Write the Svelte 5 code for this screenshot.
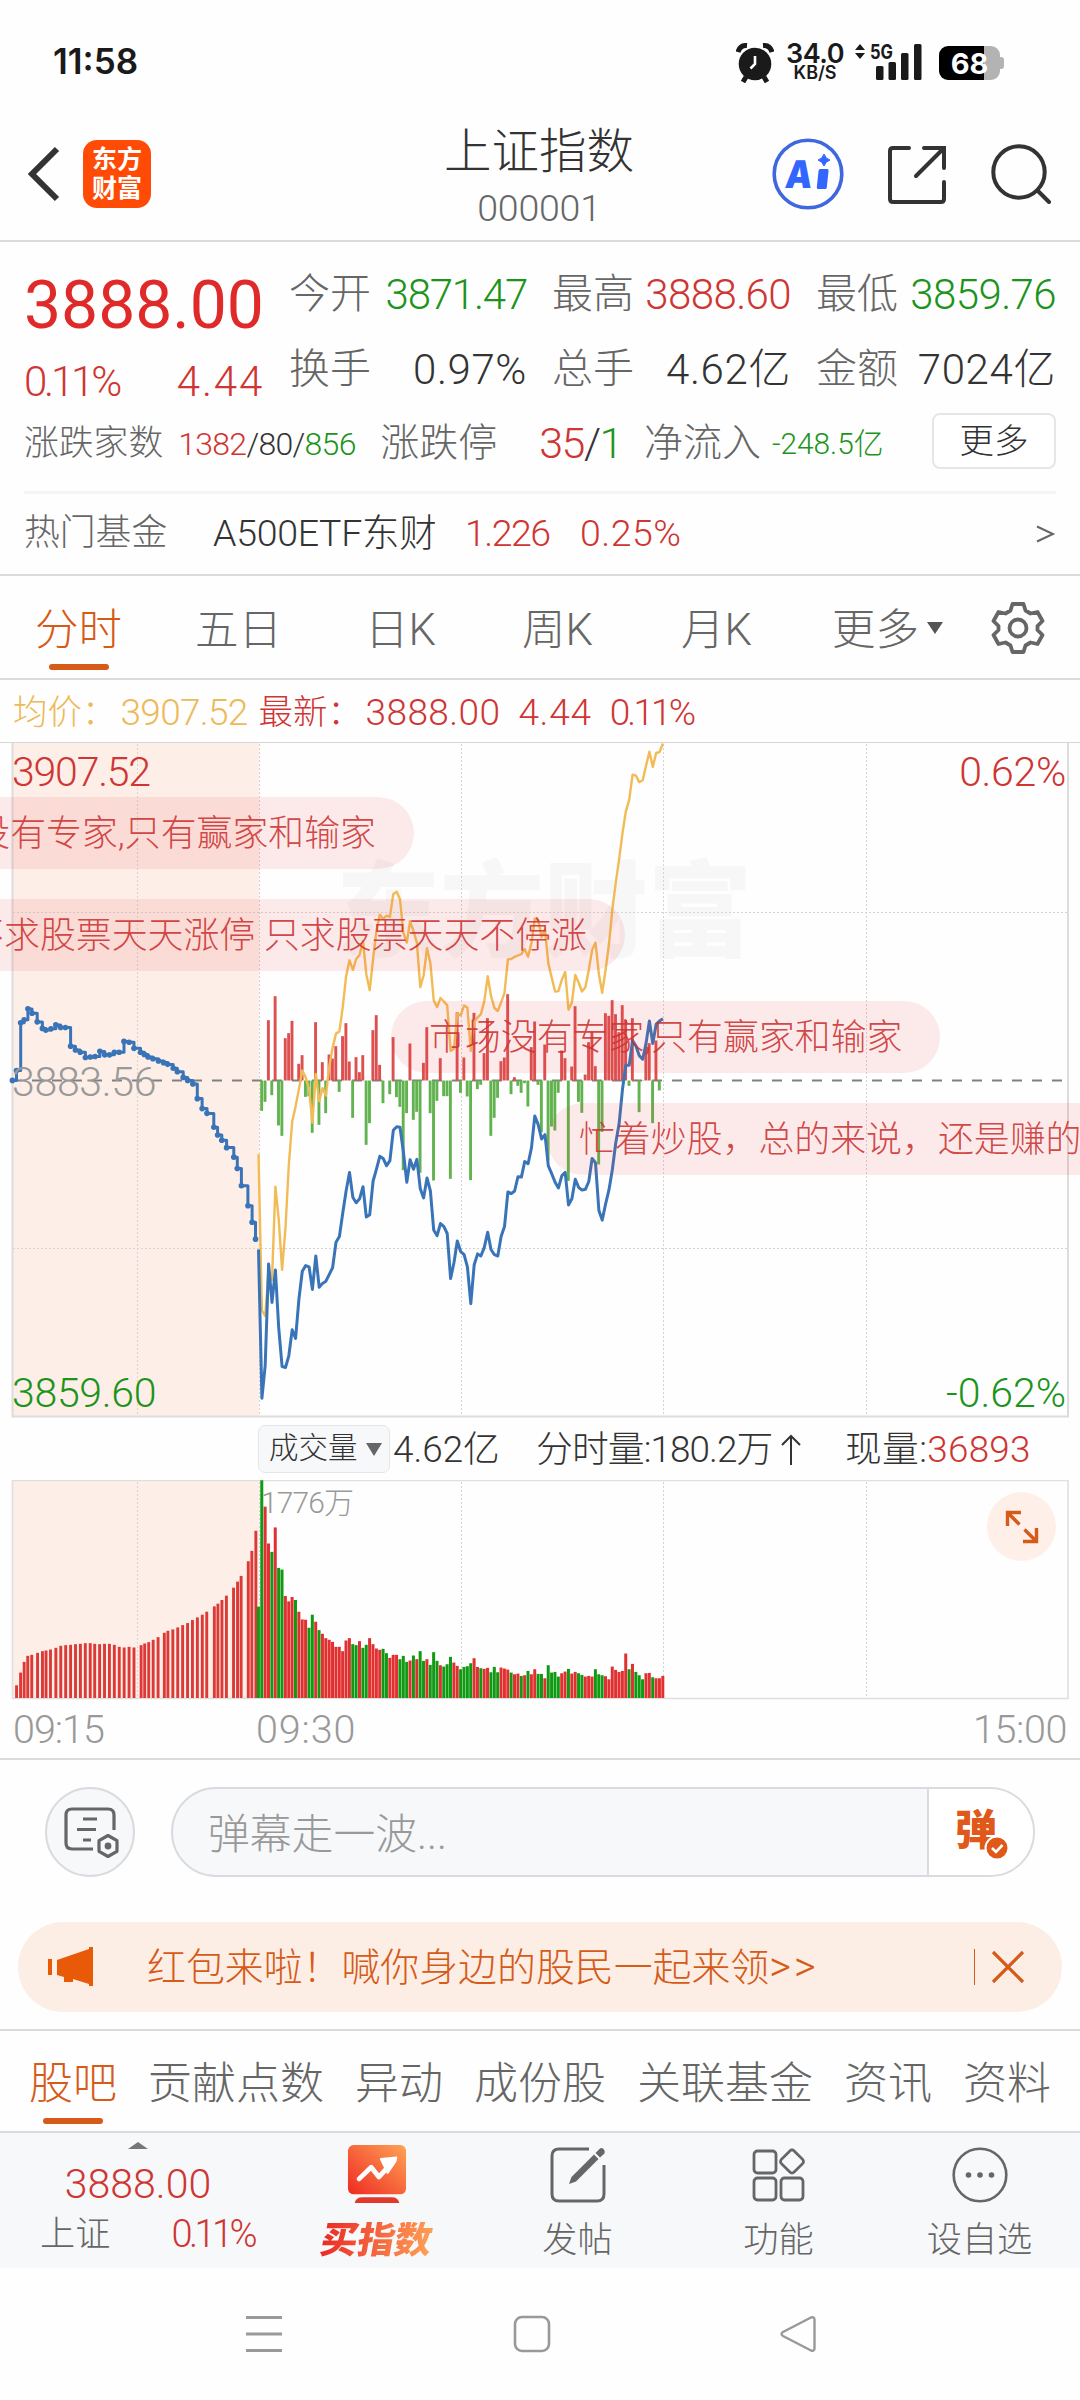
<script lang="ts">
    const quotes = [
        { label: '今开', value: '3871.47', tone: 'down' },
        { label: '最高', value: '3888.60', tone: 'up' },
        { label: '最低', value: '3859.76', tone: 'down' },
        { label: '换手', value: '0.97%', tone: '' },
        { label: '总手', value: '4.62亿', tone: '' },
        { label: '金额', value: '7024亿', tone: '' },
    ];

    const periods = ['分时', '五日', '日K', '周K', '月K'];
    const sections = ['股吧', '贡献点数', '异动', '成份股', '关联基金', '资讯', '资料'];

    // series are stored in ticks counted from the top of the chart
    const TICK = 2.306;
    const STEP = 3.37;
    const OPEN_X = 258.5;
    const MID = 338.5;
    const VOL_BASE = 218;

    const auction = [
        [36, 785], [48, 762], [60, 652], [70, 645], [81, 620], [93, 630], [108, 650], [123, 665], [133, 669],
        [148, 666], [162, 657], [176, 663], [190, 663], [205, 706], [219, 715], [233, 720], [248, 732], [262, 731],
        [276, 730], [290, 718], [304, 726], [318, 726], [332, 720], [346, 720], [360, 695], [375, 697], [389, 711],
        [408, 720], [419, 725], [430, 731], [444, 735], [460, 740], [475, 744], [487, 748], [503, 757], [515, 765],
        [532, 778], [545, 785], [560, 793], [573, 827], [587, 850], [601, 861], [621, 893], [632, 911], [644, 923],
        [658, 940], [679, 962], [689, 988], [701, 1028], [720, 1074], [732, 1112], [742, 1151],
    ].map(([x, y]) => [x / 2.904, y / TICK - 2]);

    const price = [
        1175, 1518, 1442, 1208, 1297, 1222, 1355, 1445, 1447, 1420, 1360, 1380, 1290, 1225, 1212, 1215, 1267, 1190,
        1262, 1253, 1248, 1232, 1217, 1158, 1145, 1090, 1040, 997, 1055, 1067, 1058, 1030, 1100, 1095, 1017, 990,
        960, 965, 982, 970, 900, 892, 893, 950, 1020, 968, 990, 967, 1035, 1056, 1010, 1040, 1130, 1143, 1115, 1122,
        1138, 1242, 1205, 1155, 1180, 1187, 1215, 1300, 1210, 1185, 1190, 1170, 1135, 1175, 1187, 1190, 1145, 1122,
        1042, 1046, 1040, 1007, 1008, 972, 977, 940, 867, 887, 920, 910, 982, 1000, 1020, 1033, 1005, 997, 1072,
        1058, 1013, 1032, 1038, 1036, 1018, 965, 975, 1085, 1107, 1070, 1037, 990, 930, 885, 805, 750, 750, 693,
        705, 728, 736, 700, 648, 700, 655, 648, 643,
    ];

    const average = [
        955, 1315, 1328, 1225, 1245, 1030, 1105, 1222, 1125, 980, 880, 845, 805, 762, 778, 805, 883, 770, 833, 803,
        820, 752, 710, 677, 672, 615, 545, 508, 530, 505, 495, 463, 540, 577, 505, 440, 403, 412, 405, 408, 355, 350,
        367, 445, 467, 418, 440, 468, 570, 543, 480, 515, 600, 616, 595, 603, 612, 717, 712, 630, 635, 612, 617, 717,
        650, 640, 632, 602, 545, 590, 618, 625, 605, 583, 506, 505, 500, 497, 494, 482, 500, 468, 412, 415, 455, 437,
        515, 548, 580, 579, 553, 535, 622, 605, 542, 560, 580, 570, 530, 485, 467, 540, 583, 530, 470, 390, 330, 275,
        215, 165, 138, 80, 82, 97, 93, 60, 27, 62, 30, 28, 8,
    ];

    // buying strength per minute, negative hangs below the middle line
    const strength = [
        -91, -64, 181, -44, 253, -135, -166, 127, 142, 179, 0, 50, 76, -49, -47, -157, 175, -133, 55, -98, 78, 66,
        103, -34, 133, 172, 57, -112, 70, 25, 76, -193, -128, 151, 196, 47, -68, 0, -41, 130, -50, -79, -269, -98,
        111, -118, -94, -277, 53, 160, -98, -300, -61, 67, -47, -47, -295, 0, 205, -37, 69, -48, -299, 203, -26, -13,
        82, 187, -166, -112, -52, 58, 69, 259, -41, 10, -16, -37, -8, -78, 100, 177, -13, -155, 108, -240, -138,
        -150, -37, 90, 67, -301, 42, 223, -64, -97, 18, 115, 147, 43, -252, -154, 202, 194, 241, 199, 145, 226, 182,
        -16, 187, 2, -95, 1, 108, 112, -128, 120, -30,
    ];

    const auctionVolume = [
        [37, 38], [46, 76], [54, 108], [62, 126], [71, 129], [84, 135], [95, 140], [103, 142], [113, 145], [125, 150],
        [136, 156], [147, 158], [158, 159], [169, 161], [180, 162], [191, 164], [202, 164], [212, 162], [223, 161],
        [234, 162], [245, 162], [256, 159], [267, 153], [278, 151], [289, 153], [300, 151], [316, 158], [324, 163],
        [333, 167], [343, 174], [354, 182], [368, 195], [376, 201], [387, 205], [398, 211], [409, 218], [420, 224],
        [431, 233], [442, 241], [453, 249], [463, 258], [480, 274], [488, 282], [497, 293], [507, 306], [523, 330],
        [532, 348], [540, 365], [556, 409], [564, 440], [573, 500],
    ].map(([x, h]) => ({ x: x / 2.24, h: h / 2.99 }));

    // negative = falling minute
    const volume = [
        -273, -651, 572, 462, -437, 510, -389, -384, 305, 289, 302, -293, 258, 235, 234, -210, -249, 228, -203, 192,
        179, 174, 168, 153, 153, 140, 172, 179, -161, -158, 170, -150, -159, 179, 161, 148, 144, -147, -134, 120,
        129, 129, -116, -126, -108, 112, -127, 116, -140, -111, 116, -99, -137, -111, 98, -94, -101, -123, 106, 96,
        -86, -93, -95, -104, 119, 93, -89, 87, 90, -77, -93, -77, 91, 88, 85, -76, 71, 73, -66, 68, -81, 71, 86, -72,
        -72, 59, -98, -76, -78, -64, 74, 79, -87, 73, 78, -74, -69, 64, 66, 64, -86, -71, -68, 65, 56, 94, 84, 78,
        81, 133, -86, 102, -78, -68, -56, 74, 75, -62, 59, 59, 66,
    ];

    const line = (ticks: number[]) =>
        ticks.map((t, i) => `${(OPEN_X + i * STEP).toFixed(1)},${(t / TICK - 2).toFixed(1)}`).join(' ');

    const auctionPath = auction
        .map(([x, y], i) => (i === 0 ? `M${x.toFixed(1)} ${y.toFixed(1)}` : `H${x.toFixed(1)}V${y.toFixed(1)}`))
        .join('');
</script>

<div class="screen">
    <div class="status">
        <span class="clock">11:58</span>
        <div class="status-icons">
            <svg class="alarm" viewBox="0 0 38 40" width="38" height="40">
                <circle cx="19" cy="21" r="16.3" fill="#1a1a1a" />
                <path d="M2 9Q4 2 11 2.500M36 9Q34 2 27 2.500" stroke="#1a1a1a" stroke-width="5" fill="none" />
                <path d="M10 34l-3 5M28 34l3 5" stroke="#1a1a1a" stroke-width="5" />
                <path d="M19 13v8l-4.500 4.500" stroke="#fff" stroke-width="2.600" fill="none" />
            </svg>
            <div class="speed"><b>34.0</b><small>KB/S</small></div>
            <svg class="signal" viewBox="0 0 70 40" width="70" height="40">
                <path d="M1 7l5-6 5 6zM1 10l5 6 5-6z" fill="#1a1a1a" />
                <text x="16" y="16" class="net" textLength="23" lengthAdjust="spacingAndGlyphs">5G</text>
                <rect x="22" y="23" width="7.500" height="14" rx="1.500" />
                <rect x="34.500" y="19" width="7.500" height="18" rx="1.500" />
                <rect x="47" y="10" width="7.500" height="27" rx="1.500" />
                <rect x="60" y="1" width="7.500" height="36" rx="1.500" />
            </svg>
            <div class="battery"><i></i><span>68</span></div>
        </div>
    </div>

    <header>
        <svg class="back" viewBox="0 0 34 56" width="34" height="56">
            <path d="M31 3L6 28l25 25" fill="none" stroke="#333" stroke-width="6" />
        </svg>
        <div class="logo"><span>东方</span><span>财富</span></div>
        <div class="title">
            <h1>上证指数</h1>
            <span>000001</span>
        </div>
        <svg class="ai" viewBox="0 0 72 72" width="72" height="72">
            <circle cx="36" cy="36" r="33.800" fill="none" stroke="#3f67e0" stroke-width="3.600" />
            <g transform="skewX(-6)">
                <text x="17.500" y="50" textLength="27" lengthAdjust="spacingAndGlyphs">A</text>
                <rect x="50" y="31" width="10" height="20" rx="1.500" fill="#3366ff" />
            </g>
            <path d="M52 16q1.500 5 6 6q-4.500 1.500-6 6q-1.500-4.500-6-6q4.500-1 6-6z" fill="#3366ff" stroke="#3366ff" />
        </svg>
        <svg class="share" viewBox="0 0 60 60" width="60" height="60">
            <path d="M22 3H6Q3 3 3 6v48q0 3 3 3h48q3 0 3-3V37M37 3h20v20M56 4L29 31" fill="none" stroke="#333" stroke-width="4" stroke-linecap="round" />
        </svg>
        <svg viewBox="0 0 60 60" width="60" height="60">
            <circle cx="28" cy="28" r="25.700" fill="none" stroke="#333" stroke-width="4" />
            <path d="M47 47l11 11" stroke="#333" stroke-width="4" stroke-linecap="round" />
        </svg>
    </header>

    <section class="quote">
        <div class="quote-top">
            <div class="last up">
                <strong>3888.00</strong>
                <div><span class="pct">0.11%</span><span class="diff">4.44</span></div>
            </div>
            <div class="quote-grid">
                {#each quotes as q}
                    <div class="cell"><label>{q.label}</label><span class={q.tone}>{q.value}</span></div>
                {/each}
            </div>
        </div>
        <div class="breadth">
            <span class="lab sm">涨跌家数</span>
            <span class="counts"><i class="up">1382</i>/80/<i class="down">856</i></span>
            <span class="lab">涨跌停</span>
            <span class="limits"><i class="up">35</i>/<i class="down">1</i></span>
            <span class="lab">净流入</span>
            <span class="flow down">-248.5亿</span>
            <button>更多</button>
        </div>
        <div class="fund">
            <span class="fund-label">热门基金</span>
            <span class="fund-name">A500ETF东财</span>
            <span class="up fund-price">1.226</span>
            <span class="up fund-pct">0.25%</span>
            <svg viewBox="0 0 20 20" width="20" height="20">
                <path d="M1 2.500l16 7.500-16 7.500" fill="none" stroke="#666" stroke-width="2" />
            </svg>
        </div>
    </section>

    <nav class="periods">
        {#each periods as p, i}
            <span class:active={i === 0}>{p}</span>
        {/each}
        <span class="more">更多<i></i></span>
        <svg viewBox="0 0 54 54" width="54" height="54">
            <path d="M21.500 3h11l2 6.500 5 3 7-1.500 5 9-5 5v4l5 5-5 9-7-1.500-5 3-2 6.500h-11l-2-6.500-5-3-7 1.500-5-9 5-5v-4l-5-5 5-9 7 1.500 5-3z" fill="none" stroke="#666" stroke-width="3.800" stroke-linejoin="round" />
            <circle cx="27" cy="27" r="8.500" fill="none" stroke="#666" stroke-width="3.800" />
        </svg>
    </nav>

    <div class="legend">
        <span class="avg">均价：</span><span class="avg num">3907.52</span>
        <span class="up lat">最新：</span><span class="up num">3888.00</span>
        <span class="up num wide">4.44</span>
        <span class="up num tight">0.11%</span>
    </div>

    <div class="chart">
        <div class="watermark">东方财富</div>
        <svg viewBox="0 0 1080 676" width="1080" height="676">
            <rect x="13" y="1" width="246" height="673" fill="#fdeee7" />
            <path d="M137.500 2V674M259.500 2V674M461.500 2V674M663.500 2V674M866.500 2V674M13 170.500H1067M13 506.500H1067" class="grid" />
            <path d="M12.500 1V674.500H1068V1" fill="none" stroke="#dcdcdc" stroke-width="2" />
            <path d="M0 .5H1080" stroke="#d6d6d6" />
            <path d="M12 {MID}H1066" stroke="#808080" stroke-width="1.800" stroke-dasharray="10 10" />
            {#each strength as s, i}
                <rect x={260.2 + i * STEP} y={s > 0 ? MID - s / 3 : MID} width="2.9" height={Math.abs(s) / 3} fill={s > 0 ? '#dd5050' : '#62b350'} />
            {/each}
            <polyline points={line(average)} class="avg-line" />
            <path d={auctionPath} class="price-line" />
            {#each auction as [x, y]}
                <circle cx={x} cy={y} r="2.8" fill="#3a74b8" />
            {/each}
            <polyline points={line(price)} class="price-line" />
        </svg>
        <span class="tick tl up">3907.52</span>
        <span class="tick tr up">0.62%</span>
        <span class="tick ml">3883.56</span>
        <span class="tick bl down">3859.60</span>
        <span class="tick br down">-0.62%</span>
        <span class="danmu d1">市场没有专家,只有赢家和输家</span>
        <span class="danmu d2">不求股票天天涨停 只求股票天天不停涨</span>
        <span class="danmu d3">市场没有专家,只有赢家和输家</span>
        <span class="danmu d4">忙着炒股，总的来说，还是赚的</span>
    </div>

    <div class="vol-head">
        <span class="select">成交量<i></i></span>
        <span class="v1">4.62亿</span>
        <span class="v2">分时量:180.2万<svg viewBox="0 0 20 32" width="20" height="32"><path d="M10 31V2M1 11l9-9 9 9" fill="none" stroke="#333" stroke-width="2" /></svg></span>
        <span class="v3">现量:<i class="up">36893</i></span>
    </div>

    <div class="vol-chart">
        <svg viewBox="0 0 1080 220" width="1080" height="220">
            <rect x="13" y="1" width="246" height="217" fill="#fdeee7" />
            <path d="M137.500 2V218M259.500 2V218M461.500 2V218M663.500 2V218M866.500 2V218" class="grid" />
            <path d="M12.500 .5H1068V218.500H12.500z" fill="none" stroke="#dfdfdf" stroke-width="1.600" />
            {#each auctionVolume as v}
                <rect x={v.x - 1.4} y={VOL_BASE - v.h} width="2.9" height={v.h} fill="#dc3a37" />
            {/each}
            {#each volume as v, i}
                <rect x={256.9 + i * STEP} y={VOL_BASE - Math.abs(v) / 2.99} width="3" height={Math.abs(v) / 2.99} fill={v > 0 ? '#e13030' : '#109a14'} />
            {/each}
        </svg>
        <span class="vol-max">1776万</span>
        <div class="expand">
            <svg viewBox="0 0 34 34" width="34" height="34">
                <path d="M2.500 16V2.500H16M3 3l11.500 11.500M31.500 18v13.500H18M31 31L19.500 19.500" fill="none" stroke="#d65a18" stroke-width="3.400" />
            </svg>
        </div>
    </div>

    <div class="axis"><span>09:15</span><span>09:30</span><span>15:00</span></div>

    <div class="chat">
        <div class="chat-set">
            <svg viewBox="0 0 56 52" width="56" height="52">
                <path d="M29 42H8q-6 0-6-6V8q0-6 6-6h36q6 0 6 6v15" fill="none" stroke="#666" stroke-width="3.200" />
                <path d="M19 12h14M13 22.500h19M19 33h8" stroke="#666" stroke-width="3.200" />
                <path d="M44 28.500l9 5.200v10.600l-9 5.200-9-5.200V33.700z" fill="#f7f8fa" stroke="#666" stroke-width="3.200" stroke-linejoin="round" />
                <circle cx="44" cy="39" r="3.400" fill="#666" />
            </svg>
        </div>
        <div class="chat-input">
            <span>弹幕走一波...</span>
            <div class="chat-toggle">
                <b>弹</b>
                <svg viewBox="0 0 26 26" width="26" height="26">
                    <circle cx="13" cy="13" r="11.500" fill="#e0591a" stroke="#fff" stroke-width="2" />
                    <path d="M8 13l4 4 6.500-7" fill="none" stroke="#fff" stroke-width="2.600" />
                </svg>
            </div>
        </div>
    </div>

    <div class="banner">
        <svg viewBox="0 0 46 40" width="46" height="40">
            <path d="M0 12h4v16H0zM9 13L41 2V0h4v39h-4v-2l-16-5v3h-9v-5l-7-2z" fill="#e85908" />
        </svg>
        <span>红包来啦！喊你身边的股民一起来领<em>&gt;&gt;</em></span>
        <i></i>
        <svg viewBox="0 0 34 34" width="34" height="34">
            <path d="M2 2l30 30M32 2L2 32" stroke="#d65a18" stroke-width="3.200" />
        </svg>
    </div>

    <nav class="sections">
        {#each sections as s, i}
            <span class:active={i === 0}>{s}</span>
        {/each}
    </nav>

    <footer>
        <div class="index">
            <i class="caret"></i>
            <strong class="up">3888.00</strong>
            <div><span>上证</span><span class="up">0.11%</span></div>
        </div>
        <div class="item">
            <svg viewBox="0 0 60 62" width="60" height="62">
                <defs>
                    <linearGradient id="buy" x1="0" y1="1" x2="1" y2="0">
                        <stop offset="0" stop-color="#ee2a22" />
                        <stop offset="1" stop-color="#ffa355" />
                    </linearGradient>
                </defs>
                <rect width="60" height="51" rx="6" fill="url(#buy)" />
                <path d="M7 60q1-6 8-6h30q7 0 8 6z" fill="#e0392b" />
                <path d="M11.500 35L24 23l8 10 12-13" fill="none" stroke="#fff" stroke-width="5" stroke-linecap="round" stroke-linejoin="round" />
                <path d="M34 14.500l16-1.500-1 4-8 12z" fill="#fff" stroke="#fff" stroke-width="2" stroke-linejoin="round" />
            </svg>
            <span class="buy">买指数</span>
        </div>
        <div class="item">
            <svg viewBox="0 0 56 56" width="56" height="56">
                <path d="M39 2H9Q2 2 2 9v38q0 7 7 7h38q7 0 7-7V18" fill="none" stroke="#666" stroke-width="3" />
                <path d="M19 37l2.500-7L44 7.500l4.500 4.500L26 34.500zM45.500 6l4-4q2-2 4 0t1 4.500l-4.500 4z" fill="#666" />
            </svg>
            <span>发帖</span>
        </div>
        <div class="item">
            <svg viewBox="0 0 54 56" width="54" height="56">
                <g fill="none" stroke="#666" stroke-width="2.800">
                    <rect x="2" y="4" width="22" height="22" rx="3.500" />
                    <rect x="2" y="31" width="22" height="22" rx="3.500" />
                    <rect x="29" y="31" width="22" height="22" rx="3.500" />
                    <rect x="31" y="5.500" width="18" height="18" rx="3" transform="rotate(45 40 14.500)" />
                </g>
            </svg>
            <span>功能</span>
        </div>
        <div class="item">
            <svg viewBox="0 0 56 56" width="56" height="56">
                <circle cx="28" cy="28" r="26.300" fill="none" stroke="#666" stroke-width="2.600" />
                <circle cx="16.500" cy="28" r="2.800" fill="#666" />
                <circle cx="28" cy="28" r="2.800" fill="#666" />
                <circle cx="39.500" cy="28" r="2.800" fill="#666" />
            </svg>
            <span>设自选</span>
        </div>
    </footer>

    <div class="gestures">
        <svg viewBox="0 0 36 38" width="36" height="38"><path d="M0 2.500h36M0 19h36M0 35.500h36" stroke="#999" stroke-width="3" /></svg>
        <svg viewBox="0 0 38 38" width="38" height="38"><rect x="2" y="2" width="34" height="34" rx="7" fill="none" stroke="#999" stroke-width="2.600" /></svg>
        <svg viewBox="0 0 38 38" width="38" height="38"><path d="M32 2.500L4 17q-3 2 0 4l28 14.500q3.500 1 3.500-2v-29q0-3-3.500-2z" fill="none" stroke="#999" stroke-width="2.400" /></svg>
    </div>
</div>

<style>
    :global(body) { margin: 0; background: #fff; }

    .screen {
        width: 1080px;
        height: 2400px;
        overflow: hidden;
        background: #fefefe;
        color: #333;
        font-family: Roboto, "Noto Sans CJK SC", sans-serif;
        font-weight: 300;
        line-height: 1;
        white-space: nowrap;
    }

    svg { display: block; flex: none; }
    i, em { font-style: normal; }
    .up { color: #cf3532; }
    .down { color: #1c941c; }

    /* status bar */
    .status {
        height: 120px;
        padding: 0 75px 0 53px;
        display: flex;
        justify-content: space-between;
        box-sizing: border-box;
    }
    .clock { margin-top: 44px; font: 600 35px/1 Inter, sans-serif; color: #1a1a1a; }
    .status-icons { display: flex; margin-top: 43px; }
    .alarm { margin-right: 13px; }
    .speed {
        width: 56px;
        display: flex;
        flex-direction: column;
        align-items: center;
        font-family: Inter, sans-serif;
        color: #1a1a1a;
    }
    .speed b { font-size: 27px; line-height: 21px; font-weight: 600; letter-spacing: -0.5px; }
    .speed small { font-size: 18px; line-height: 18px; font-weight: 600; }
    .signal { margin-left: 11px; }
    .signal rect { fill: #1a1a1a; }
    .net { font: 700 20px Inter, sans-serif; fill: #1a1a1a; }
    .battery {
        position: relative;
        width: 61px;
        height: 34px;
        margin: 3px 5px 0 15px;
        border-radius: 9px;
        background: linear-gradient(90deg, #000 45px, #b3b3b3 45px);
        text-align: center;
    }
    .battery i {
        position: absolute;
        right: -4px;
        top: 11px;
        width: 5px;
        height: 12px;
        border-radius: 0 3px 3px 0;
        background: #b3b3b3;
    }
    .battery span { font: 700 29px/35px Inter, sans-serif; color: #fff; }

    /* header */
    header {
        position: relative;
        height: 122px;
        padding: 18px 29px 0 26px;
        display: flex;
        box-sizing: border-box;
        border-bottom: 2px solid #dadada;
    }
    .back { margin-top: 8px; }
    .logo {
        width: 68px;
        height: 68px;
        margin: 2px auto 0 23px;
        border-radius: 14px;
        background: #ff4b05;
        color: #fff;
        font-size: 25px;
        font-weight: 700;
        line-height: 29px;
        text-align: center;
        padding-top: 5px;
        box-sizing: border-box;
        display: flex;
        flex-direction: column;
    }
    .title {
        position: absolute;
        left: 0;
        right: 2px;
        top: 7px;
        text-align: center;
    }
    .title h1 { margin: 0; font-size: 47.5px; font-weight: 300; line-height: 51px; }
    .title span { display: block; margin-top: 12px; font-size: 37.5px; line-height: 37px; color: #666; letter-spacing: -0.2px; }
    .ai text { font: 900 38px Inter, sans-serif; fill: #3366ff; }
    .share { margin: 7px 44px 0 43px; }
    header > svg:last-child { margin-top: 6px; }

    /* quote */
    .quote { height: 334px; box-sizing: border-box; padding: 0 24px; border-bottom: 2px solid #dadada; }
    .quote-top { display: flex; height: 162px; }
    .last { width: 239px; }
    .last strong { display: block; margin-top: 31px; font-size: 66px; line-height: 66px; font-weight: 400; color: #e02a2a; }
    .last div { display: flex; justify-content: space-between; margin-top: 22px; font-size: 42px; line-height: 41px; }
    .pct { letter-spacing: -3.2px; }
    .diff { letter-spacing: 1.8px; margin-right: -1px; }
    .quote-grid {
        margin-left: 26px;
        display: grid;
        grid-template-columns: 238px 239px 240px;
        grid-template-rows: 75px 75px;
        column-gap: 25px;
        padding-top: 15px;
    }
    .cell { display: flex; align-items: center; justify-content: space-between; font-size: 42px; letter-spacing: -0.6px; }
    .cell:first-child { letter-spacing: -1.2px; }
    .cell:nth-child(n + 4) { letter-spacing: 0.6px; }
    .cell label { font-size: 41px; letter-spacing: 0; color: #666; }
    .breadth { display: flex; align-items: center; height: 79px; }
    .lab { font-size: 39px; color: #666; }
    .lab.sm { font-size: 34.8px; }
    .counts { width: 178px; margin: 0 24px 0 15px; font-size: 32px; letter-spacing: -0.7px; }
    .limits { margin: 0 22px 0 42px; font-size: 43px; letter-spacing: -1.5px; }
    .flow { font-size: 29.8px; margin-left: 11px; }
    button {
        width: 124px;
        height: 56px;
        margin: -6px 0 0 auto;
        padding: 2px 0 0;
        border: 2px solid #e6e6e6;
        border-radius: 8px;
        background: #fff;
        font: inherit;
        font-size: 34.5px;
        color: #333;
    }
    .fund {
        margin-top: 8px;
        height: 80px;
        border-top: 3px solid #f5f5f5;
        display: flex;
        align-items: center;
        font-size: 37.5px;
        letter-spacing: -0.3px;
    }
    .fund-label { width: 189px; font-size: 35.8px; letter-spacing: 0; color: #666; }
    .fund-name { width: 252px; }
    .fund-price { width: 115px; letter-spacing: -1.5px; }
    .fund-pct { letter-spacing: 0.5px; }
    .fund svg { margin-left: auto; }

    /* period tabs */
    .periods {
        height: 104px;
        display: grid;
        grid-template-columns: 160px 170px 157px 159px 151px 1fr auto;
        align-items: center;
        justify-items: start;
        padding: 7px 35px 0 35px;
        box-sizing: border-box;
        border-bottom: 2px solid #dadada;
        font-size: 43.5px;
        color: #666;
    }
    .periods svg { margin-top: -6px; }
    .active { position: relative; color: #d65a18; }
    .active::after {
        content: '';
        position: absolute;
        left: 50%;
        bottom: -18px;
        width: 60px;
        height: 6px;
        margin-left: -30px;
        border-radius: 3px;
        background: #d65a18;
    }
    .more { display: flex; align-items: center; }
    .more i { margin: -6px 0 0 8px; border: 8px solid transparent; border-top: 12px solid #555; border-bottom: 0; }

    .legend { height: 62px; display: flex; align-items: center; padding: 3px 0 0 13px; font-size: 34.5px; box-sizing: border-box; }
    .avg { color: #edb95a; }
    .num { font-size: 37px; margin-right: 18px; }
    .num.avg { margin: 0 11px 0 4px; letter-spacing: -0.7px; }
    .num.wide { letter-spacing: 0.7px; }
    .num.tight { letter-spacing: -2.8px; }
    .lat { width: 107px; }
    .lat + .num { letter-spacing: 0.4px; }

    /* minute chart */
    .chart { position: relative; height: 676px; }
    .chart svg { position: relative; }
    .grid { fill: none; stroke: #d4d4d4; stroke-width: 1; stroke-dasharray: 2 2; }
    .price-line { fill: none; stroke: #3a74b8; stroke-width: 3; stroke-linejoin: round; }
    .avg-line { fill: none; stroke: #f2bb55; stroke-width: 2.4; stroke-linejoin: round; }
    .watermark {
        position: absolute;
        left: 336px;
        top: 120px;
        font-size: 104px;
        font-weight: 900;
        color: #f7f7f7;
    }
    .tick { position: absolute; font-size: 41px; line-height: 40px; }
    .tl { left: 12px; top: 10px; letter-spacing: -1.2px; }
    .tr { right: 14px; top: 10px; letter-spacing: -0.3px; }
    .ml { left: 12px; top: 320px; color: #999; letter-spacing: -0.3px; }
    .bl { left: 12px; bottom: 5px; letter-spacing: -0.3px; }
    .br { right: 14px; bottom: 5px; }
    .danmu {
        position: absolute;
        height: 72px;
        padding: 0 38px;
        border-radius: 36px;
        background: rgba(232, 60, 60, 0.1);
        color: rgba(205, 50, 50, 0.9);
        font-size: 35.9px;
        line-height: 74px;
    }
    .d1 { right: 666px; top: 55px; }
    .d2 { right: 455px; top: 157px; }
    .d3 { left: 391px; top: 259px; }
    .d4 { left: 547px; top: 361px; padding-left: 32px; }

    /* volume */
    .vol-head { display: flex; align-items: center; height: 62px; padding-left: 258px; font-size: 36.8px; }
    .vol-head > span:not(.select) { margin-top: 2px; }
    .select {
        width: 132px;
        height: 48px;
        display: flex;
        align-items: center;
        padding-left: 10px;
        box-sizing: border-box;
        border: 1.5px solid #e4e6ea;
        border-radius: 7px;
        background: #f7f8fa;
        font-size: 29.5px;
    }
    .select i { margin-left: 8px; border: 8px solid transparent; border-top: 13px solid #666; border-bottom: 0; }
    .v1 { width: 143px; margin-left: 3px; }
    .v2 { width: 309px; display: flex; align-items: center; letter-spacing: -0.9px; }
    .v2 svg { margin-left: 9px; }
    .v3 { letter-spacing: 0.3px; }
    .vol-chart { position: relative; height: 220px; }
    .vol-max { position: absolute; left: 261px; top: 7px; font-size: 30px; line-height: 32px; color: #999; letter-spacing: -0.9px; }
    .expand {
        position: absolute;
        right: 24px;
        top: 12px;
        width: 69px;
        height: 69px;
        border-radius: 50%;
        background: #fef0e9;
        display: flex;
        align-items: center;
        justify-content: center;
    }
    .axis {
        height: 56px;
        padding: 2px 13px 0;
        display: flex;
        align-items: center;
        border-bottom: 2px solid #dadada;
        font-size: 39.5px;
        color: #999;
        letter-spacing: -1px;
    }
    .axis span:nth-child(2) { margin-left: 152px; letter-spacing: 0.9px; }
    .axis span:last-child { margin-left: auto; letter-spacing: -0.4px; }

    /* bullet chat input */
    .chat { display: flex; padding: 27px 45px 0; }
    .chat-set, .chat-input { height: 90px; box-sizing: border-box; border: 2px solid #d9dbdf; border-radius: 45px; background: #f7f8fa; }
    .chat-set { width: 90px; display: flex; align-items: center; justify-content: center; }
    .chat-set svg { margin: 2px 0 0 4px; }
    .chat-input {
        width: 864px;
        margin-left: 36px;
        display: flex;
        justify-content: space-between;
        align-items: center;
        padding-left: 35px;
        overflow: hidden;
        font-size: 41.8px;
        color: #999;
    }
    .chat-input > span { margin-top: 5px; }
    .chat-toggle {
        position: relative;
        width: 106px;
        height: 100%;
        box-sizing: border-box;
        padding: 21px 0 0 26px;
        border-left: 2px solid #d9dbdf;
        background: #fff;
    }
    .chat-toggle b { display: block; font-size: 42px; font-weight: 900; color: #e0591a; }
    .chat-toggle svg { position: absolute; right: 23px; top: 46px; }

    .banner {
        box-sizing: border-box;
        height: 90px;
        margin: 45px 18px 17px;
        padding: 0 37px 0 30px;
        display: flex;
        align-items: center;
        border-radius: 45px;
        background: #fceee5;
        color: #d65a18;
        font-size: 38.9px;
    }
    .banner span { margin-left: 53px; }
    .banner em { letter-spacing: 3px; font-size: 42px; }
    .banner i { width: 1.5px; height: 36px; margin: 0 16px 0 auto; background: #d65a18; }

    /* content tabs */
    .sections {
        height: 104px;
        box-sizing: border-box;
        padding: 6px 29px 0 29px;
        display: flex;
        align-items: center;
        justify-content: space-between;
        border-top: 2px solid #dadada;
        border-bottom: 2px solid #dadada;
        font-size: 44px;
        color: #666;
    }

    /* bottom bar */
    footer {
        height: 135px;
        display: grid;
        grid-template-columns: 276px 201px 201px 201px 201px;
        background: #f7f8fa;
        font-size: 35.2px;
        color: #666;
    }
    .index { position: relative; text-align: center; padding-top: 31px; }
    .caret { position: absolute; left: 128px; top: 9px; border: 10px solid transparent; border-bottom: 7px solid #777; border-top: 0; }
    .index strong { display: block; font-size: 41px; font-weight: 300; line-height: 40px; }
    .index div { display: flex; justify-content: space-between; padding: 10px 22px 0 40px; line-height: 40px; }
    .index div .up { font-size: 38px; letter-spacing: -3.6px; }
    .item { display: flex; flex-direction: column; align-items: center; padding: 12px 0 0 0; }
    .item svg { height: 60px; }
    .item span { margin-top: 18px; }
    .item .buy {
        margin-top: 17px;
        font-size: 37px;
        font-weight: 900;
        transform: skewX(-10deg);
        background: linear-gradient(90deg, #ea2a25, #ffa055);
        -webkit-background-clip: text;
        background-clip: text;
        color: transparent;
    }

    .gestures { display: flex; align-items: center; height: 132px; padding-left: 246px; }
    .gestures svg + svg { margin-left: 231px; }
    .gestures svg:last-child { margin-left: 228px; }
</style>
